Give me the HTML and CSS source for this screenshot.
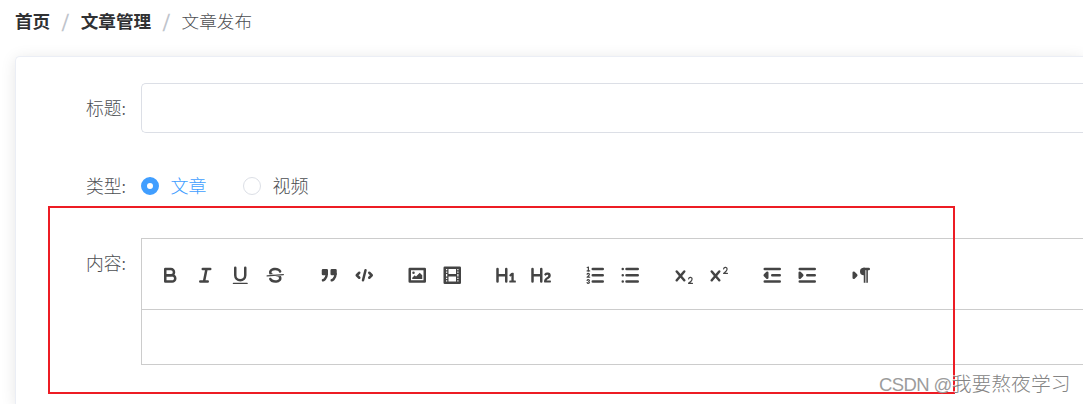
FILE: index.html
```html
<!DOCTYPE html>
<html lang="zh-CN">
<head>
<meta charset="utf-8">
<title>文章发布</title>
<link rel="stylesheet" href="styles.css">
</head>
<body>
<nav class="breadcrumb">
  <a class="crumb-link">首页</a><span class="sep">/</span><a class="crumb-link">文章管理</a><span class="sep">/</span><span class="crumb">文章发布</span>
</nav>
<main class="card">
  <div class="row row-title"><label class="label">标题:</label><div class="input"></div></div>
  <div class="row row-type"><label class="label">类型:</label>
    <div class="radios">
      <span class="radio checked"><i class="dot"></i><span class="radio-text">文章</span></span>
      <span class="radio"><i class="dot"></i><span class="radio-text">视频</span></span>
    </div>
  </div>
  <div class="row row-content"><label class="label">内容:</label>
    <div class="editor">
      <div class="toolbar">
        <div class="group">
          <button class="tool"><svg viewBox="0 0 18 18"><path class="stroke" d="M5,4H9.5A2.5,2.5,0,0,1,12,6.5v0A2.5,2.5,0,0,1,9.5,9H5A0,0,0,0,1,5,9V4A0,0,0,0,1,5,4Z"/><path class="stroke" d="M5,9h5.5A2.5,2.5,0,0,1,13,11.5v0A2.5,2.5,0,0,1,10.5,14H5a0,0,0,0,1,0,0V9A0,0,0,0,1,5,9Z"/></svg></button>
          <button class="tool"><svg viewBox="0 0 18 18"><path class="stroke" d="M7,4H13M5,14H11M8,14L10,4"/></svg></button>
          <button class="tool"><svg viewBox="0 0 18 18"><path class="stroke" d="M5,3V9a4.012,4.012,0,0,0,4,4H9a4.012,4.012,0,0,0,4-4V3"/><rect class="fill" height="1" rx=".5" width="12" x="3" y="15"/></svg></button>
          <button class="tool"><svg viewBox="0 0 18 18"><path class="stroke thin" d="M15.5,8.5L2.5,9.5"/><path class="fill" d="M9.007,8C6.542,7.791,6,7.519,6,6.5,6,5.792,7.283,5,9,5c1.571,0,2.765.679,2.969,1.309a1,1,0,0,0,1.9-.617C13.356,4.106,11.354,3,9,3,6.2,3,4,4.538,4,6.5a3.2,3.2,0,0,0,.5,1.843Z"/><path class="fill" d="M8.984,10C11.457,10.208,12,10.479,12,11.5c0,0.708-1.283,1.5-3,1.5-1.571,0-2.765-.679-2.969-1.309a1,1,0,1,0-1.9.617C4.644,13.894,6.646,15,9,15c2.8,0,5-1.538,5-3.5a3.2,3.2,0,0,0-.5-1.843Z"/></svg></button>
        </div>
        <div class="group">
          <button class="tool"><svg viewBox="0 0 18 18"><rect class="fill stroke" height="3" width="3" x="4" y="5"/><rect class="fill stroke" height="3" width="3" x="11" y="5"/><path class="fill stroke" d="M7,8c0,4.031-3,5-3,5"/><path class="fill stroke" d="M14,8c0,4.031-3,5-3,5"/></svg></button>
          <button class="tool"><svg viewBox="0 0 18 18"><path class="stroke" d="M5,7L3,9L5,11M13,7L15,9L13,11M10,5L8,13"/></svg></button>
        </div>
        <div class="group">
          <button class="tool"><svg viewBox="0 0 18 18"><rect class="stroke" height="10" width="12" x="3" y="4"/><circle class="fill" cx="6" cy="7" r="1"/><polyline class="fill" points="5 12 5 11 7 9 8 10 11 7 13 9 13 12 5 12"/></svg></button>
          <button class="tool"><svg viewBox="0 0 18 18"><rect class="stroke" height="12" width="12" x="3" y="3"/><path class="fill" d="M5,3h1v12h-1zM12,3h1v12h-1zM5,8h8v2h-8zM3,5h3v1h-3zM3,7h3v1h-3zM3,10h3v1h-3zM3,12h3v1h-3zM12,5h3v1h-3zM12,7h3v1h-3zM12,10h3v1h-3zM12,12h3v1h-3z"/></svg></button>
        </div>
        <div class="group">
          <button class="tool"><svg viewBox="0 0 18 18"><path class="fill" d="M10,4V14a1,1,0,0,1-2,0V10H3v4a1,1,0,0,1-2,0V4A1,1,0,0,1,3,4V8H8V4a1,1,0,0,1,2,0Zm6.06787,9.209H14.98975V7.59863a.54085.54085,0,0,0-.605-.60547h-.62744a1.01119,1.01119,0,0,0-.748.29688L11.645,8.56641a.5435.5435,0,0,0-.022.8584l.28613.30762a.53861.53861,0,0,0,.84717.0332l.09912-.08789a1.2137,1.2137,0,0,0,.2417-.35254h.02246s-.01123.30859-.01123.60547V13.209H12.041a.54085.54085,0,0,0-.605.60547v.43945a.54085.54085,0,0,0,.605.60547h4.02686a.54085.54085,0,0,0,.605-.60547v-.43945A.54085.54085,0,0,0,16.06787,13.209Z"/></svg></button>
          <button class="tool"><svg viewBox="0 0 18 18"><path class="fill" d="M16.73975,13.81445v.43945a.54085.54085,0,0,1-.605.60547H11.855a.58392.58392,0,0,1-.64893-.60547V14.0127c0-2.90527,3.39941-3.42187,3.39941-4.55469a.77675.77675,0,0,0-.84717-.78125,1.17684,1.17684,0,0,0-.83594.38477c-.2749.26367-.561.374-.85791.13184l-.4292-.34082c-.30811-.24219-.38525-.51758-.1543-.81445a2.97155,2.97155,0,0,1,2.45361-1.17676,2.45393,2.45393,0,0,1,2.68408,2.40918c0,2.45312-3.1792,2.92676-3.27832,3.93848h2.79443A.54085.54085,0,0,1,16.73975,13.81445ZM9,3A.99974.99974,0,0,0,8,4V8H3V4A1,1,0,0,0,1,4V14a1,1,0,0,0,2,0V10H8v4a1,1,0,0,0,2,0V4A.99974.99974,0,0,0,9,3Z"/></svg></button>
        </div>
        <div class="group">
          <button class="tool"><svg viewBox="0 0 18 18"><path class="stroke" d="M7,4H15M7,9H15M7,14H15"/><path class="stroke thin" d="M2.5,5.5H4.5"/><path class="fill" d="M3.5,6A0.5,0.5,0,0,1,3,5.5V3.085l-0.276.138A0.5,0.5,0,0,1,2.053,3c-0.124-.247-0.023-0.324.224-0.447l1-.5A0.5,0.5,0,0,1,4,2.5v3A0.5,0.5,0,0,1,3.5,6Z"/><path class="stroke thin" d="M4.5,10.5h-2c0-.234,1.85-1.076,1.85-2.234A0.959,0.959,0,0,0,2.5,8.156"/><path class="stroke thin" d="M2.5,14.846a0.959,0.959,0,0,0,1.85-.109A0.7,0.7,0,0,0,3.75,14a0.688,0.688,0,0,0,.6-0.736,0.959,0.959,0,0,0-1.85-.109"/></svg></button>
          <button class="tool"><svg viewBox="0 0 18 18"><path class="stroke" d="M6,4H15M6,9H15M6,14H15M3,4H3M3,9H3M3,14H3"/></svg></button>
        </div>
        <div class="group">
          <button class="tool"><svg viewBox="0 0 18 18"><path class="fill" d="M15.5,15H13.861a3.858,3.858,0,0,0,1.914-2.975,1.8,1.8,0,0,0-1.6-1.751A1.921,1.921,0,0,0,12.021,11.7a0.50013,0.50013,0,1,0,.957.291h0a0.914,0.914,0,0,1,1.053-.725,0.81,0.81,0,0,1,.744.762c0,1.076-1.16971,1.86982-1.93971,2.43082A1.45639,1.45639,0,0,0,12,15.5a0.5,0.5,0,0,0,.5.5h3A0.5,0.5,0,0,0,15.5,15Z"/><path class="fill" d="M9.65,5.241a1,1,0,0,0-1.409.108L6,7.964,3.759,5.349A1,1,0,0,0,2.192,6.59178Q2.21541,6.6213,2.241,6.649L4.684,9.5,2.241,12.35A1,1,0,0,0,3.71,13.70722q0.02557-.02768.049-0.05722L6,11.036,8.241,13.65a1,1,0,1,0,1.567-1.24277Q9.78459,12.3777,9.759,12.35L7.316,9.5,9.759,6.651A1,1,0,0,0,9.65,5.241Z"/></svg></button>
          <button class="tool"><svg viewBox="0 0 18 18"><path class="fill" d="M15.5,7H13.861a4.015,4.015,0,0,0,1.914-2.975,1.8,1.8,0,0,0-1.6-1.751A1.922,1.922,0,0,0,12.021,3.7a0.5,0.5,0,1,0,.957.291,0.917,0.917,0,0,1,1.053-.725,0.81,0.81,0,0,1,.744.762c0,1.077-1.164,1.925-1.934,2.486A1.423,1.423,0,0,0,12,7.5a0.5,0.5,0,0,0,.5.5h3A0.5,0.5,0,0,0,15.5,7Z"/><path class="fill" d="M9.65,5.241a1,1,0,0,0-1.409.108L6,7.964,3.759,5.349A1,1,0,0,0,2.192,6.59178Q2.21541,6.6213,2.241,6.649L4.684,9.5,2.241,12.35A1,1,0,0,0,3.71,13.70722q0.02557-.02768.049-0.05722L6,11.036,8.241,13.65a1,1,0,1,0,1.567-1.24277Q9.78459,12.3777,9.759,12.35L7.316,9.5,9.759,6.651A1,1,0,0,0,9.65,5.241Z"/></svg></button>
        </div>
        <div class="group">
          <button class="tool"><svg viewBox="0 0 18 18"><path class="stroke" d="M3,14H15M3,4H15M9,9H15"/><polyline class="fill stroke" points="5 7 5 11 3 9 5 7"/></svg></button>
          <button class="tool"><svg viewBox="0 0 18 18"><path class="stroke" d="M3,14H15M3,4H15M9,9H15"/><polyline class="fill stroke" points="3 7 3 11 5 9 3 7"/></svg></button>
        </div>
        <div class="group">
          <button class="tool"><svg viewBox="0 0 18 18"><polygon class="fill stroke" points="3 11 5 9 3 7 3 11"/><path class="stroke" d="M15,4H11"/><path class="fill" d="M11,3a3,3,0,0,0,0,6h1V3H11Z"/><path class="fill" d="M11,4h1.3v11h-1.3zM13,4h1.3v11h-1.3z"/><path class="pale" d="M12.3,5h.7v10h-.7z"/></svg></button>
        </div>
      </div>
      <div class="edit-area"></div>
    </div>
  </div>
</main>
<div class="highlight"></div>
<div class="watermark"><span class="latin">CSDN @</span>我要熬夜学习</div>
</body>
</html>
```
FILE: styles.css
```css
* { box-sizing: border-box; }
html { height: 404px; overflow: hidden; }
body {
  margin: 0;
  width: 1083px;
  height: 404px;
  overflow: hidden;
  position: relative;
  background: #fff;
  color: #4c4e52;
  font: 300 18px/24px "Noto Sans CJK SC", sans-serif;
}
.breadcrumb { display: flex; height: 56px; padding: 9px 0 0 15px; font-size: 17.6px; }
.crumb-link { font-weight: 700; color: #303133; }
.sep { width: 30.5px; padding-right: 1.5px; text-align: center; font-weight: 700; color: #c0c4cc; transform: skewX(-5deg); }
.card {
  margin-left: 15px;
  height: 348px;
  padding: 26px 0 0 20px;
  border: 1px solid #ebeef5;
  border-width: 1px 0 0 1px;
  border-radius: 5px 0 0 0;
  background: #fff;
  box-shadow: 0 2.5px 15px rgba(0, 0, 0, .1), 15px 2.5px 15px rgba(0, 0, 0, .01);
}
.row { display: flex; }
.row-title { height: 78px; }
.row-type { height: 77px; }
.label { width: 105px; padding: 12px 15px 0 0; text-align: right; font-size: 17.8px; }
.input { flex: 1; height: 50px; border: 1px solid #dcdfe6; border-width: 1px 0 1px 1px; border-radius: 5px 0 0 5px; }
.radios { display: flex; gap: 36.5px; padding-top: 12px; }
.radio { display: flex; gap: 11.5px; }
.dot { width: 18px; height: 18px; margin-top: 4px; border: 1px solid #dcdfe6; border-radius: 50%; }
.checked { color: #409eff; }
.checked .dot { border: 6.5px solid #409eff; }
.editor { flex: 1; height: 127px; border: 1px solid #ccc; border-right: 0; }
.toolbar { display: flex; gap: 18.75px; height: 71px; padding: 21px 0 0 10.5px; border-bottom: 1px solid #ccc; }
.group { display: flex; }
.tool { width: 35px; height: 30px; padding: 3.75px 6.25px; border: 0; background: none; }
.tool svg { display: block; width: 22.5px; height: 22.5px; }
.fill { fill: #444; }
.pale { fill: #aaa; }
.stroke { fill: none; stroke: #444; stroke-width: 2; stroke-linecap: round; stroke-linejoin: round; }
.fill.stroke { fill: #444; }
.thin { stroke-width: 1; }
.highlight { position: absolute; left: 48px; top: 206px; width: 907px; height: 188px; border: 2px solid #ed1c24; }
.watermark {
  position: absolute;
  left: 879px;
  top: 369px;
  font-size: 19.8px;
  line-height: 28px;
  white-space: nowrap;
  color: #848484;
  text-shadow: -1px -1px 0 rgba(255, 255, 255, .7);
}
.latin { font-family: "Liberation Sans", sans-serif; font-size: 18.5px; letter-spacing: -.6px; color: #9c9c9c; }
```
